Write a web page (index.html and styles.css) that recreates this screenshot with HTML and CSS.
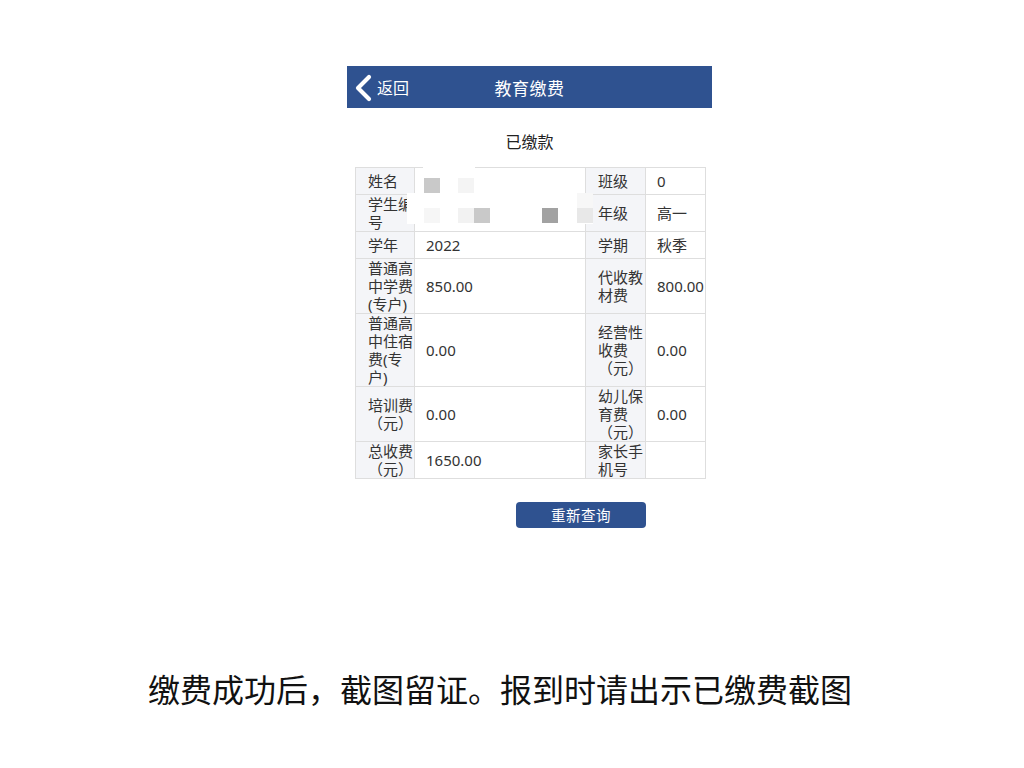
FILE: index.html
```html
<!DOCTYPE html>
<html lang="zh">
<head>
<meta charset="utf-8">
<title>教育缴费</title>
<link rel="stylesheet" href="styles.css">
</head>
<body>
<div class="phone">
  <div class="topbar">
    <div class="back">
      <svg class="chev" width="20" height="28" viewBox="0 0 20 28"><polyline points="16,3 5,14 16,25" fill="none" stroke="#fff" stroke-width="4.2" stroke-linecap="round" stroke-linejoin="round"/></svg>
      <span>返回</span>
    </div>
    <div class="title">教育缴费</div>
  </div>
  <div class="subtitle">已缴款</div>
  <div class="tablewrap">
    <table class="info">
      <colgroup><col class="c1"><col class="c2"><col class="c3"><col class="c4"></colgroup>
      <tr class="r1"><td class="lb">姓名</td><td></td><td class="lb">班级</td><td>0</td></tr>
      <tr class="r2"><td class="lb">学生编号</td><td></td><td class="lb">年级</td><td>高一</td></tr>
      <tr class="r3"><td class="lb">学年</td><td>2022</td><td class="lb">学期</td><td>秋季</td></tr>
      <tr class="r4"><td class="lb">普通高中学费(专户)</td><td>850.00</td><td class="lb">代收教材费</td><td class="tight">800.00</td></tr>
      <tr class="r5"><td class="lb">普通高中住宿费(专户)</td><td>0.00</td><td class="lb">经营性收费（元）</td><td>0.00</td></tr>
      <tr class="r6"><td class="lb">培训费（元）</td><td>0.00</td><td class="lb">幼儿保育费（元）</td><td>0.00</td></tr>
      <tr class="r7"><td class="lb">总收费（元）</td><td>1650.00</td><td class="lb">家长手机号</td><td></td></tr>
    </table>
    <div class="mask m-top"></div>
    <div class="mask m-row2"></div>
    <div class="px" style="left:69px;top:11px;background:#c9c9c9"></div>
    <div class="px" style="left:103px;top:11px;background:#f4f4f4"></div>
    <div class="px" style="left:69px;top:41px;background:#f6f6f6"></div>
    <div class="px" style="left:103px;top:41px;background:#f2f2f2"></div>
    <div class="px" style="left:119px;top:41px;background:#c9c9c9"></div>
    <div class="px" style="left:187px;top:41px;background:#a2a2a2"></div>
    <div class="px" style="left:222px;top:26px;background:#f7f7f7"></div>
    <div class="px" style="left:222px;top:41px;background:#e8e8e8"></div>
  </div>
  <div class="btnrow"><button class="btn">重新查询</button></div>
</div>
<div class="caption">缴费成功后，截图留证。报到时请出示已缴费截图</div>
</body>
</html>
```

FILE: styles.css
```css
html, body {
  margin: 0;
  padding: 0;
  background: #ffffff;
}
body {
  font-family: "Noto Sans", "Noto Sans CJK SC", sans-serif;
  color: #333;
}
.phone {
  width: 365px;
  margin-left: 347px;
  padding-top: 66px;
}
.topbar {
  position: relative;
  height: 42px;
  background: #2f5290;
  color: #fff;
  display: flex;
  align-items: center;
  justify-content: center;
}
.back {
  position: absolute;
  left: 6px;
  top: 0;
  height: 42px;
  display: flex;
  align-items: center;
  font-size: 16px;
}
.chev {
  margin-right: 4px;
  margin-top: 1px;
}
.title {
  font-size: 17px;
  letter-spacing: 0.5px;
}
.subtitle {
  padding-top: 24px;
  padding-bottom: 15px;
  line-height: 20px;
  height: 20px;
  text-align: center;
  font-size: 16px;
  color: #222;
}
.tablewrap {
  position: relative;
  margin-left: 8px;
  width: 351px;
}
.info {
  border-collapse: collapse;
  table-layout: fixed;
  width: 351px;
  font-size: 15px;
  line-height: 18px;
}
.c1 { width: 59px; }
.c2 { width: 171px; }
.c3 { width: 60px; }
.c4 { width: 60px; }
.info td {
  border: 1px solid #dedede;
  padding: 0 0 0 11px;
  vertical-align: middle;
  color: #333;
  overflow: visible;
  white-space: normal;
  word-break: break-all;
}
.info td.lb {
  background: #f4f5f8;
  padding-left: 12px;
  padding-right: 1px;
}
.info td.tight {
  white-space: nowrap;
}
.r1 td { height: 26px; }
.r2 td { height: 36px; }
.r3 td { height: 26px; }
.r4 td { height: 54px; }
.r5 td { height: 72px; }
.r6 td { height: 54px; }
.r7 td { height: 35px; }
.mask {
  position: absolute;
  background: #fff;
}
.m-top {
  left: 68px;
  top: -2px;
  width: 52px;
  height: 5px;
}
.m-row2 {
  left: 52px;
  top: 26px;
  width: 186px;
  height: 31px;
}
.px {
  position: absolute;
  width: 16px;
  height: 15px;
}
.btnrow {
  padding-top: 23px;
  padding-left: 169px;
}
.btn {
  display: block;
  width: 130px;
  height: 26px;
  border: none;
  border-radius: 4px;
  background: #2f5290;
  color: #fff;
  font-family: "Noto Sans CJK SC", sans-serif;
  font-size: 14.5px;
  line-height: 26px;
  padding: 0;
  letter-spacing: 0.5px;
}
.caption {
  margin-top: 140px;
  margin-left: 148px;
  font-family: "Noto Sans CJK SC", sans-serif;
  font-size: 32px;
  line-height: 40px;
  font-weight: 400;
  color: #111;
  white-space: nowrap;
}
```
